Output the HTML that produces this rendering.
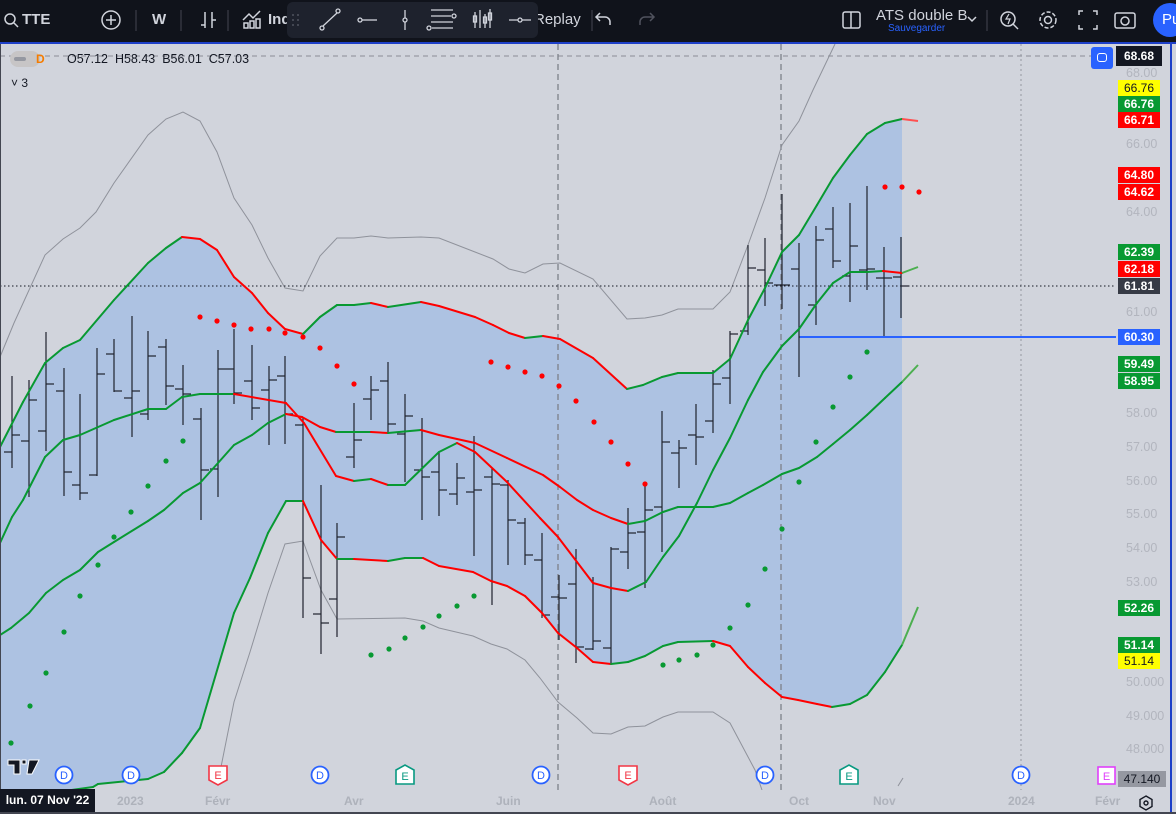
<!DOCTYPE html>
<html><head><meta charset="utf-8">
<style>
html,body{margin:0;padding:0;background:#d1d4dc;}
body{width:1176px;height:814px;overflow:hidden;position:relative;font-family:"Liberation Sans",sans-serif;}
#top{position:absolute;left:0;top:0;width:1176px;height:42px;background:#10131b;color:#d1d4dc;}
#top .t{position:absolute;top:11px;font-size:15px;font-weight:bold;}
#float{position:absolute;left:287px;top:2px;width:251px;height:36px;background:#1e222d;border-radius:6px;}
#chart{position:absolute;left:0;top:42px;}
.lbl{position:absolute;left:1118px;width:42px;height:16px;font-size:12px;line-height:16px;text-align:center;color:#fff;font-weight:bold;}
.ax{position:absolute;left:1126px;font-size:12.5px;color:#b2b5be;}
.xl{position:absolute;top:794px;font-size:12px;color:#aeb2bb;font-weight:bold;}
</style></head><body>
<div id="top">
 <svg width="1176" height="42" style="position:absolute;left:0;top:0">
  <g fill="none" stroke="#d1d4dc" stroke-width="1.5">
   <circle cx="10" cy="19" r="5"/><line x1="14" y1="23" x2="18" y2="27"/>
   <circle cx="111" cy="20" r="9"/><line x1="111" y1="15" x2="111" y2="25"/><line x1="106" y1="20" x2="116" y2="20"/>
   <line x1="205" y1="12" x2="205" y2="28"/><line x1="201" y1="25" x2="205" y2="25"/><line x1="212" y1="12" x2="212" y2="28"/><line x1="212" y1="20" x2="216" y2="20"/>
   <path d="M243 20l6-6 4 4 7-7M244 28v-5h4v5zM250 28v-7h4v7zM256 28v-9h4v9z"/>
   <path d="M610 25v-3a5 5 0 0 0-5-5h-9M600 13l-4 4 4 4"/>
   <rect x="843" y="12" width="17" height="16" rx="2"/><line x1="851" y1="12" x2="851" y2="28"/>
   <path d="M968 17l4 4 4-4"/>
   <circle cx="1008" cy="19" r="7"/><line x1="1013" y1="24" x2="1018" y2="29"/><path d="M1009 14l-3 5h4l-2 5" stroke-width="1.2"/>
   <circle cx="1048" cy="20" r="3.5"/><circle cx="1048" cy="20" r="8" stroke-dasharray="4 2"/>
   <path d="M1079 15v-4h4M1093 11h4v4M1097 25v4h-4M1083 29h-4v-4"/>
   <rect x="1115" y="13" width="20" height="15" rx="2"/><circle cx="1125" cy="21" r="4"/>
  </g>
  <path d="M640 25v-3a5 5 0 0 1 5-5h9M650 13l4 4-4 4" stroke="#50535e" fill="none" stroke-width="1.5"/>
  <line x1="136" y1="10" x2="136" y2="31" stroke="#434651"/><line x1="181" y1="10" x2="181" y2="31" stroke="#434651"/><line x1="228" y1="10" x2="228" y2="31" stroke="#434651"/><line x1="592" y1="10" x2="592" y2="31" stroke="#434651"/><line x1="987" y1="10" x2="987" y2="31" stroke="#434651"/>
  <circle cx="1170" cy="20" r="17" fill="#2962ff"/>
 </svg>
 <span class="t" style="left:22px">TTE</span>
 <span class="t" style="left:152px">W</span>
 <span class="t" style="left:268px">Ind</span>
 <span class="t" style="left:534px;font-weight:normal">Replay</span>
 <span style="position:absolute;left:876px;top:7px;font-size:15px;color:#d1d4dc">ATS double B</span>
 <span style="position:absolute;left:888px;top:23px;font-size:10px;color:#2962ff">Sauvegarder</span>
 <span class="t" style="left:1162px;color:#fff;font-weight:normal">Pu</span>
 <div id="float"><svg width="251" height="36" fill="none" stroke="#d1d4dc" stroke-width="1.3">
  <g fill="#50535e" stroke="none"><circle cx="6" cy="13" r="1"/><circle cx="11" cy="13" r="1"/><circle cx="6" cy="18" r="1"/><circle cx="11" cy="18" r="1"/><circle cx="6" cy="23" r="1"/><circle cx="11" cy="23" r="1"/></g>
  <circle cx="35" cy="26" r="2"/><circle cx="51" cy="9" r="2"/><line x1="36" y1="24" x2="50" y2="11"/>
  <circle cx="73" cy="18" r="2"/><line x1="75" y1="18" x2="90" y2="18"/>
  <line x1="118" y1="8" x2="118" y2="28"/><circle cx="118" cy="18" r="2" fill="#1e222d"/>
  <line x1="144" y1="8" x2="166" y2="8"/><line x1="144" y1="14" x2="164" y2="14"/><circle cx="167" cy="14" r="2"/><line x1="144" y1="20" x2="166" y2="20"/><circle cx="142" cy="26" r="2"/><line x1="145" y1="26" x2="166" y2="26"/>
  <path d="M188 10v16M193 8v18M198 12v14M203 7v19"/><rect x="186.5" y="14" width="3" height="6"/><rect x="196.5" y="15" width="3" height="6"/><rect x="201.5" y="11" width="3" height="7"/>
  <line x1="222" y1="18" x2="244" y2="18"/><circle cx="233" cy="18" r="2" fill="#1e222d"/>
 </svg></div>
</div>
<div style="position:absolute;left:0;top:42px;width:1176px;height:2px;background:#1e40c8"></div>
<svg id="chart" width="1176" height="772" viewBox="0 42 1176 772">
 <defs><clipPath id="cp"><rect x="0" y="44" width="1116" height="746"/></clipPath></defs>
 <rect x="0" y="44" width="1176" height="770" fill="#d1d4dc"/>
 <g id="g" clip-path="url(#cp)"></g>
 <line x1="1171" y1="44" x2="1171" y2="814" stroke="#1e40c8" stroke-width="2"/>
 <line x1="0" y1="44" x2="0" y2="814" stroke="#434651" stroke-width="2"/>
 <line x1="0" y1="813" x2="1176" y2="813" stroke="#434651" stroke-width="2"/>
</svg>
<div style="position:absolute;left:10px;top:51px;width:30px;height:16px;border-radius:8px;background:#c7c5c6"></div>
<div style="position:absolute;left:14px;top:57px;width:12px;height:4px;border-radius:2px;background:#9598a1"></div>
<span style="position:absolute;left:36px;top:52px;font-size:12px;color:#f57c00;font-weight:bold">D</span>
<span style="position:absolute;left:67px;top:52px;font-size:12.5px;color:#131722">O57.12 &nbsp;H58.43 &nbsp;B56.01 &nbsp;C57.03</span>
<span style="position:absolute;left:11px;top:76px;font-size:12px;color:#131722">˅ 3</span>

<div class="ax" style="top:66px">68.00</div>
<div class="ax" style="top:137px">66.00</div>
<div class="ax" style="top:205px">64.00</div>
<div class="ax" style="top:305px">61.00</div>
<div class="ax" style="top:406px">58.00</div>
<div class="ax" style="top:440px">57.00</div>
<div class="ax" style="top:474px">56.00</div>
<div class="ax" style="top:507px">55.00</div>
<div class="ax" style="top:541px">54.00</div>
<div class="ax" style="top:575px">53.00</div>
<div class="ax" style="top:675px">50.000</div>
<div class="ax" style="top:709px">49.000</div>
<div class="ax" style="top:742px">48.000</div>

<div style="position:absolute;left:1116px;top:46px;width:46px;height:20px;background:#131722"></div>
<div class="lbl" style="top:48px;background:none">68.68</div>
<div style="position:absolute;left:1091px;top:47px;width:22px;height:22px;border-radius:3px;background:#2962ff"></div>
<div style="position:absolute;left:1097px;top:53px;width:10px;height:9px;border:1.5px solid #fff;border-radius:3px;box-sizing:border-box"></div>
<div class="lbl" style="top:80px;background:#ffff00;color:#131722;font-weight:normal">66.76</div>
<div class="lbl" style="top:96px;background:#089932">66.76</div>
<div class="lbl" style="top:112px;background:#ff0000">66.71</div>
<div class="lbl" style="top:167px;background:#ff0000">64.80</div>
<div class="lbl" style="top:184px;background:#ff0000">64.62</div>
<div class="lbl" style="top:244px;background:#089932">62.39</div>
<div class="lbl" style="top:261px;background:#ff0000">62.18</div>
<div class="lbl" style="top:278px;background:#363a45">61.81</div>
<div class="lbl" style="top:329px;background:#2962ff">60.30</div>
<div class="lbl" style="top:356px;background:#089932">59.49</div>
<div class="lbl" style="top:373px;background:#089932">58.95</div>
<div class="lbl" style="top:600px;background:#089932">52.26</div>
<div class="lbl" style="top:637px;background:#089932">51.14</div>
<div class="lbl" style="top:653px;background:#ffff00;color:#131722;font-weight:normal">51.14</div>
<div class="lbl" style="top:771px;left:1118px;width:48px;background:#9598a1;color:#131722;font-weight:normal">47.140</div>

<div class="xl" style="left:117px">2023</div>
<div class="xl" style="left:205px">Févr</div>
<div class="xl" style="left:344px">Avr</div>
<div class="xl" style="left:496px">Juin</div>
<div class="xl" style="left:649px">Août</div>
<div class="xl" style="left:789px">Oct</div>
<div class="xl" style="left:873px">Nov</div>
<div class="xl" style="left:1008px">2024</div>
<div class="xl" style="left:1095px">Févr</div>
<div style="position:absolute;left:0;top:789px;width:95px;height:23px;background:#131722;color:#fff;font-size:12px;line-height:23px;text-align:center;font-weight:bold">lun. 07 Nov '22</div>
<svg style="position:absolute;left:1137px;top:794px" width="18" height="18"><path d="M9 2l6 3.5v7L9 16 3 12.5v-7z" fill="none" stroke="#131722" stroke-width="1.4"/><circle cx="9" cy="9" r="2" fill="none" stroke="#131722" stroke-width="1.4"/></svg>

<script>
const g=document.getElementById('g');const NS='http://www.w3.org/2000/svg';
function el(t,a){const e=document.createElementNS(NS,t);for(const k in a)e.setAttribute(k,a[k]);g.appendChild(e);return e;}
const P=a=>a.map(p=>p.join(',')).join(' ');
const OU=[[0,447],[23,402],[45,363],[63,348],[80,340],[114,300],[148,263],[166,248],[182,237],[200,239],[217,250],[234,277],[252,293],[268,313],[285,329],[303,334],[320,317],[337,305],[354,305],[371,303],[388,307],[421,302],[439,306],[475,317],[493,325],[509,333],[525,338],[543,336],[560,339],[593,358],[627,389],[643,385],[662,377],[678,373],[713,373],[730,359],[748,320],[765,288],[782,252],[799,235],[817,205],[833,178],[850,155],[867,134],[885,123],[902,119]];
const OL=[[0,800],[93,787],[98,784],[148,779],[164,772],[182,753],[200,728],[234,613],[250,578],[268,533],[286,501],[303,501],[321,540],[337,559],[354,559],[388,561],[405,558],[423,558],[439,566],[473,572],[491,581],[507,586],[525,596],[542,613],[558,633],[577,648],[593,662],[611,664],[628,662],[645,656],[663,646],[678,642],[713,641],[730,646],[748,667],[765,683],[782,697],[798,700],[817,704],[832,707],[850,704],[867,695],[885,672],[902,645]];
const UI=[[0,543],[12,517],[23,500],[45,457],[63,440],[80,435],[114,420],[148,409],[166,409],[182,397],[200,394],[234,394],[286,403],[304,423],[336,476],[354,481],[371,479],[388,485],[405,485],[439,452],[457,443],[475,452],[507,482],[540,518],[558,537],[577,562],[593,583],[611,588],[628,591],[646,582],[663,557],[679,536],[697,503],[713,470],[730,438],[748,400],[763,372],[782,346],[799,329],[817,303],[833,283],[850,272],[867,272],[883,271],[902,273]];
const LI=[[0,635],[11,628],[29,613],[46,593],[63,580],[80,570],[98,552],[114,542],[148,521],[164,510],[183,493],[200,483],[218,463],[234,445],[252,435],[268,423],[286,414],[302,417],[320,427],[336,432],[371,432],[388,433],[421,430],[439,435],[475,443],[507,458],[543,475],[560,487],[577,500],[593,510],[611,518],[628,524],[645,521],[663,512],[678,507],[713,507],[730,503],[748,493],[763,485],[782,474],[799,468],[817,457],[833,444],[850,430],[867,415],[885,398],[902,382]];
const GT=[[0,357],[14,323],[45,255],[63,239],[80,228],[96,212],[114,183],[148,135],[166,119],[183,112],[200,121],[217,152],[234,198],[252,225],[268,258],[285,288],[303,291],[320,256],[337,238],[354,238],[371,236],[388,238],[421,237],[439,238],[475,252],[493,259],[509,269],[525,273],[543,264],[560,263],[593,279],[627,319],[645,318],[662,315],[678,309],[713,309],[730,292],[748,245],[765,198],[782,145],[799,121],[813,90],[835,44]];
const GB=[[221,767],[234,702],[250,652],[268,593],[285,544],[303,541],[321,590],[337,619],[405,618],[423,621],[439,628],[473,636],[491,644],[507,649],[525,660],[540,678],[558,702],[577,718],[593,733],[611,734],[628,727],[645,726],[663,717],[678,712],[713,712],[730,723],[755,770],[762,790]];
el('polygon',{points:P(OU.concat(OL.slice().reverse())),fill:'#adc2e2'});
el('line',{x1:0,y1:56,x2:1116,y2:56,stroke:'#8a8d96','stroke-dasharray':'5 4'});
[558,781].forEach(x=>el('line',{x1:x,y1:44,x2:x,y2:790,stroke:'#7d8089','stroke-dasharray':'6 4','stroke-width':1.3}));
el('line',{x1:1021,y1:44,x2:1021,y2:790,stroke:'#9598a1','stroke-dasharray':'2 3'});
el('polyline',{points:P(GT),fill:'none',stroke:'#8f929b','stroke-width':1});
el('polyline',{points:P(GB),fill:'none',stroke:'#8f929b','stroke-width':1});
el('line',{x1:898,y1:786,x2:903,y2:778,stroke:'#8f929b'});
el('line',{x1:0,y1:286,x2:1116,y2:286,stroke:'#131722','stroke-dasharray':'1.5 2.5'});
const B=[[12,376,468,452,435],[29,380,497,441,400],[46,332,451,431,384],[64,368,496,391,472],[80,394,500,485,493],[97,348,476,475,374],[114,339,392,354,391],[132,316,437,398,391],[148,331,420,414,356],[166,339,405,347,386],[183,365,425,389,394],[201,408,520,419,470],[218,350,497,469,369],[234,329,404,369,393],[252,345,420,381,408],[269,366,445,390,380],[285,356,444,376,414],[303,417,618,425,578],[321,485,654,614,623],[337,523,637,599,537],[354,403,468,457,440],[371,376,420,399,390],[388,362,433,381,424],[405,394,482,434,416],[422,418,520,470,477],[439,452,516,472,490],[457,463,505,494,478],[474,436,556,492,490],[492,468,605,477,484],[508,480,565,485,520],[525,518,565,523,555],[542,533,618,560,615],[559,575,640,597,598],[576,549,663,584,647],[593,577,650,649,641],[611,547,664,648,549],[628,508,569,552,533],[645,484,588,532,510],[662,411,552,507,442],[679,440,488,453,448],[696,404,465,435,437],[713,370,433,421,384],[730,331,404,378,334],[748,245,335,331,268],[765,238,306,270,283],[782,194,309,285,285],[799,243,377,269,337],[816,226,325,305,240],[833,207,268,229,261],[850,203,302,276,246],[867,186,290,270,269],[884,247,337,278,278],[901,237,318,277,286]];
B.forEach(b=>{el('line',{x1:b[0],y1:b[1],x2:b[0],y2:b[2],stroke:'#1e222d','stroke-width':1.2});el('line',{x1:b[0]-8,y1:b[3],x2:b[0],y2:b[3],stroke:'#1e222d','stroke-width':1.2});el('line',{x1:b[0],y1:b[4],x2:b[0]+8,y2:b[4],stroke:'#1e222d','stroke-width':1.2});});
el('line',{x1:800,y1:337,x2:1116,y2:337,stroke:'#2962ff','stroke-width':2});
function cl(a){for(let i=0;i<a.length-1;i++){const[p,q]=[a[i],a[i+1]];const c=q[1]<p[1]-0.5?'#089932':(q[1]>p[1]+0.5?'#ff0000':'#089932');el('line',{x1:p[0],y1:p[1],x2:q[0],y2:q[1],stroke:c,'stroke-width':2,'stroke-linecap':'round'});}}
[OU,OL,UI,LI].forEach(cl);
el('line',{x1:902,y1:119,x2:918,y2:121,stroke:'#ff5050','stroke-width':2});
el('line',{x1:902,y1:645,x2:918,y2:607,stroke:'#4caf50','stroke-width':2});
el('line',{x1:902,y1:273,x2:918,y2:267,stroke:'#4caf50','stroke-width':2});
el('line',{x1:902,y1:382,x2:918,y2:365,stroke:'#4caf50','stroke-width':2});
const R=[[200,317],[217,321],[234,325],[251,329],[269,329],[285,333],[303,337],[320,348],[337,366],[354,384],[491,362],[508,367],[525,372],[542,376],[559,386],[576,401],[594,422],[611,442],[628,464],[645,484],[885,187],[902,187],[919,192]];
const G=[[11,743],[30,706],[46,673],[64,632],[80,596],[98,565],[114,537],[131,512],[148,486],[166,461],[183,441],[371,655],[389,649],[405,638],[423,627],[439,616],[457,606],[474,596],[663,665],[679,660],[697,655],[713,645],[730,628],[748,605],[765,569],[782,529],[799,482],[816,442],[833,407],[850,377],[867,352]];
R.forEach(p=>el('circle',{cx:p[0],cy:p[1],r:2.6,fill:'#ff0000'}));
G.forEach(p=>el('circle',{cx:p[0],cy:p[1],r:2.6,fill:'#089932'}));
</script>
<svg style="position:absolute;left:0;top:0" width="1176" height="814">
 <g font-family="Liberation Sans,sans-serif" font-size="11" text-anchor="middle">
  <g fill="#fff" stroke="#2962ff" stroke-width="1.8">
   <circle cx="64" cy="775" r="8.5"/><circle cx="131" cy="775" r="8.5"/><circle cx="320" cy="775" r="8.5"/><circle cx="541" cy="775" r="8.5"/><circle cx="765" cy="775" r="8.5"/><circle cx="1021" cy="775" r="8.5"/>
  </g>
  <g fill="#2962ff"><text x="64" y="779">D</text><text x="131" y="779">D</text><text x="320" y="779">D</text><text x="541" y="779">D</text><text x="765" y="779">D</text><text x="1021" y="779">D</text></g>
  <path d="M209 766h18v14l-9 5-9-5z" fill="#fff" stroke="#f23645" stroke-width="1.6"/><text x="218" y="779" fill="#f23645">E</text>
  <path d="M619 766h18v14l-9 5-9-5z" fill="#fff" stroke="#f23645" stroke-width="1.6"/><text x="628" y="779" fill="#f23645">E</text>
  <path d="M396 784h18v-14l-9-5-9 5z" fill="#fff" stroke="#089981" stroke-width="1.6"/><text x="405" y="780" fill="#089981">E</text>
  <path d="M840 784h18v-14l-9-5-9 5z" fill="#fff" stroke="#089981" stroke-width="1.6"/><text x="849" y="780" fill="#089981">E</text>
  <rect x="1098" y="767" width="17" height="17" fill="#fff" stroke="#e040fb" stroke-width="1.6"/><text x="1106.5" y="780" fill="#e040fb">E</text>
 </g>
 <path d="M8 760h12v14h-6v-9h-6zM22 760h4v4h-4zM29 760h10l-7 14h-5z" fill="#131722" stroke="#fff" stroke-width="1"/>
</svg>
</body></html>
